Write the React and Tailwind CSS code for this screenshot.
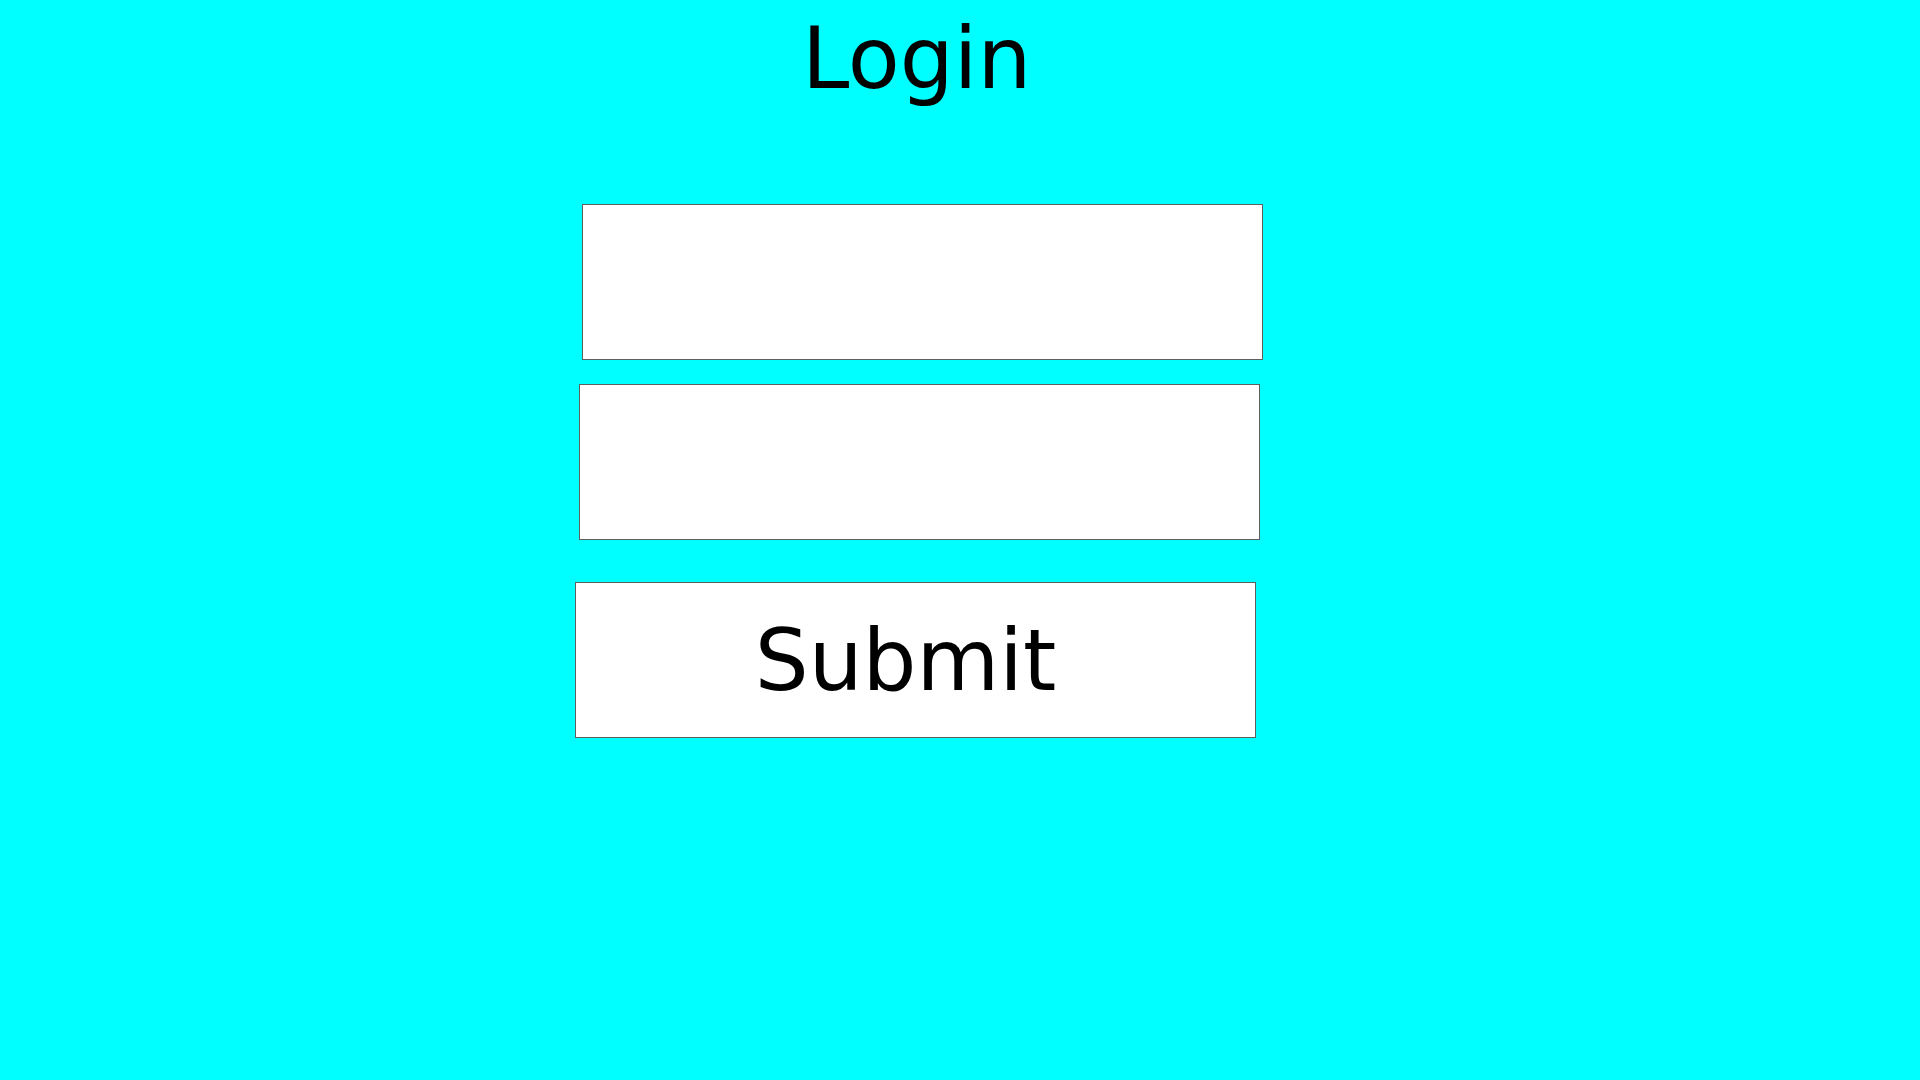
import React from 'react';

const App = () => {
    const [user, setUser] = React.useState('');
    const [pass, setPass] = React.useState('');

    return (
        <div className="min-h-screen w-full bg-[#00ffff] font-['DejaVu_Sans',sans-serif] text-black">
            <div className="flex flex-col items-start pt-[16px]">
                {/* Title */}
                <h1 className="ml-[802px] text-[85px] leading-[85px] font-normal">Login</h1>

                {/* Fields */}
                <input
                    type="text"
                    value={user}
                    onChange={(e) => setUser(e.target.value)}
                    className="mt-[103px] ml-[582px] w-[681px] h-[156px] bg-white border border-[#5f5f5f] outline-none"
                />
                <input
                    type="password"
                    value={pass}
                    onChange={(e) => setPass(e.target.value)}
                    className="mt-[24px] ml-[579px] w-[681px] h-[156px] bg-white border border-[#5f5f5f] outline-none"
                />

                <button
                    type="button"
                    className="mt-[42px] ml-[575px] w-[681px] h-[156px] bg-white border border-[#5f5f5f] pr-[20px] text-[85px] leading-[85px] text-black"
                >
                    Submit
                </button>
            </div>
        </div>
    );
};

export default App;
